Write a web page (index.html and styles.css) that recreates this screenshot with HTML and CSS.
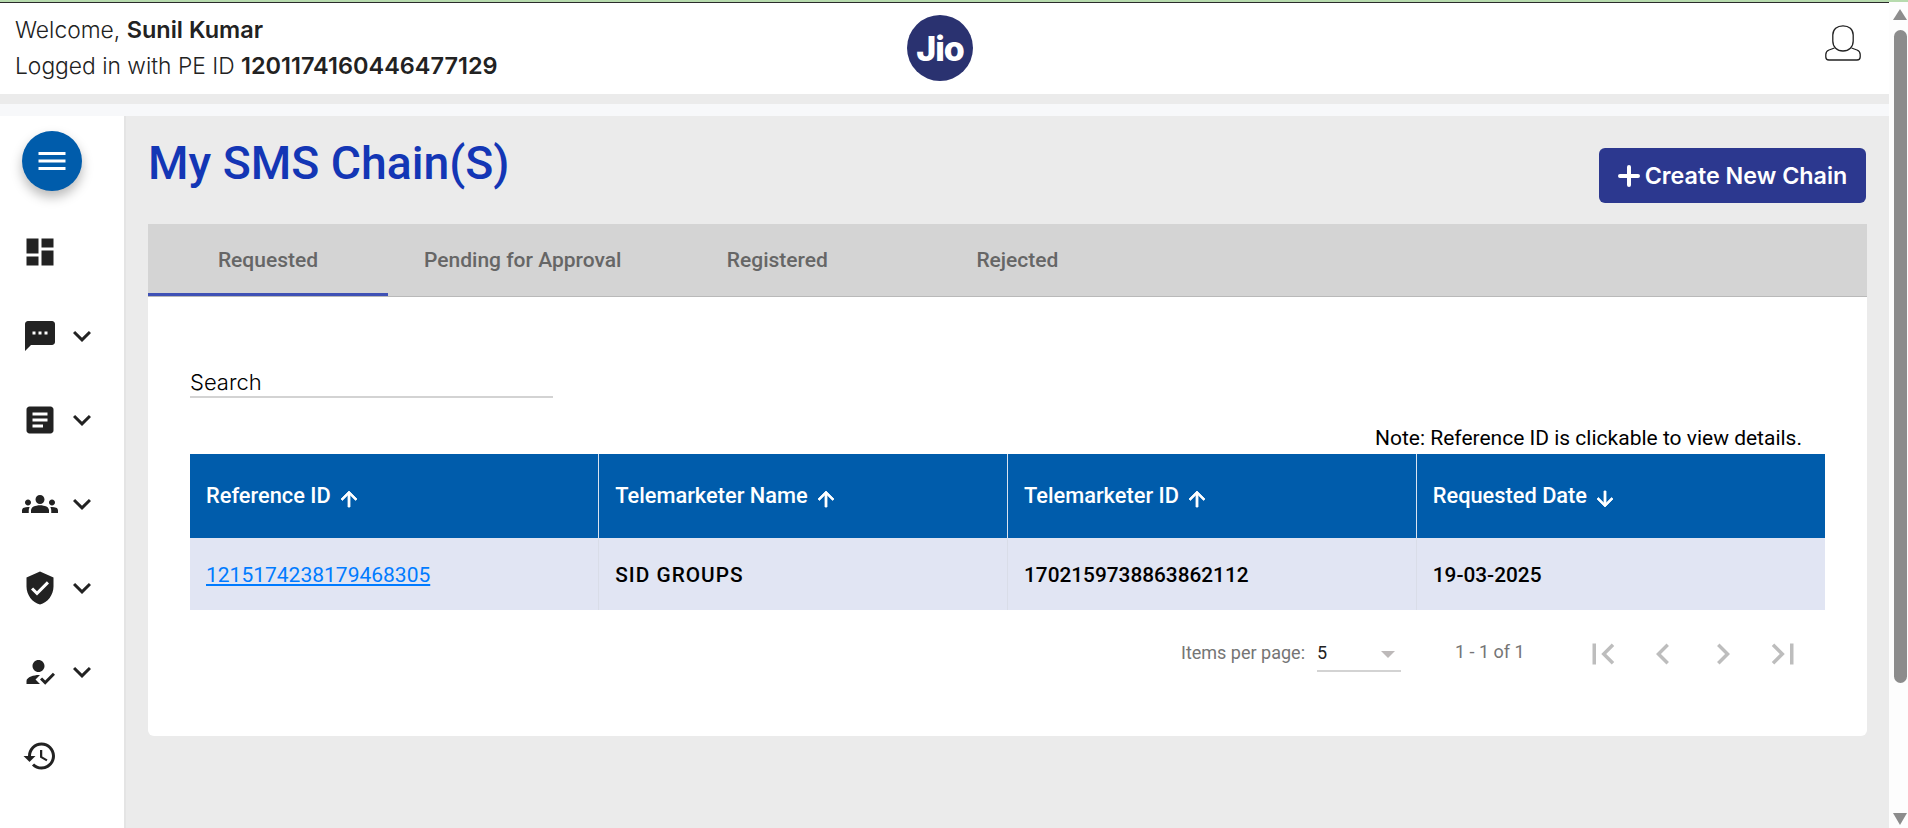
FILE: index.html
```html
<!DOCTYPE html>
<html lang="en">
<head>
<meta charset="utf-8">
<title>My SMS Chain(S)</title>
<link rel="stylesheet" href="styles.css">
</head>
<body>
<div class="app">
  <div class="page">
    <header class="header">
      <div class="welcome">
        <div class="welcome-line">Welcome, <b>Sunil Kumar</b></div>
        <div class="welcome-line">Logged in with PE ID <b>1201174160446477129</b></div>
      </div>
      <div class="logo"><span>Jio</span></div>
      <div class="user">
        <svg class="user-icon" viewBox="0 0 36 36" fill="none" stroke="#222" stroke-width="1.3">
          <path d="M18 .8C12 .8 7.800 4.500 7.800 10v6c0 6 4.200 10 10.200 10s10.200-4 10.200-10v-6C28.200 4.500 24 .8 18 .8z"/>
          <path d="M9.500 23L4 25C1.500 26 .8 27.500.8 29.500V32c0 2 1.200 3 3.200 3h28c2 0 3.200-1 3.200-3v-2.500c0-2-.7-3.500-3.200-4.500l-5.500-2"/>
        </svg>
      </div>
    </header>
    <div class="band-grey"></div>
    <div class="band-light"></div>
    <div class="body-row">
      <nav class="sidebar">
        <button class="fab" aria-label="Menu">
          <svg viewBox="0 0 24 24" class="fab-icon"><path d="M3 18h18v-2H3v2zm0-5h18v-2H3v2zm0-7v2h18V6H3z"/></svg>
        </button>
        <div class="nav-row"><svg class="nav-icon" viewBox="0 0 24 24"><path d="M3 13h8V3H3v10zm0 8h8v-6H3v6zm10 0h8V11h-8v10zm0-18v6h8V3h-8z"/></svg></div>
        <div class="nav-row"><svg class="nav-icon" viewBox="0 0 24 24"><path d="M20 2H4c-1.100 0-1.990.9-1.990 2L2 22l4-4h14c1.100 0 2-.9 2-2V4c0-1.100-.9-2-2-2zM9 11H7V9h2v2zm4 0h-2V9h2v2zm4 0h-2V9h2v2z"/></svg><svg class="nav-icon" viewBox="0 0 24 24"><path d="M16.590 8.590L12 13.170 7.410 8.590 6 10l6 6 6-6z"/></svg></div>
        <div class="nav-row"><svg class="nav-icon" viewBox="0 0 24 24"><path d="M19 3H5c-1.100 0-2 .9-2 2v14c0 1.100.9 2 2 2h14c1.100 0 2-.9 2-2V5c0-1.100-.9-2-2-2zm-5 14H7v-2h7v2zm3-4H7v-2h10v2zm0-4H7V7h10v2z"/></svg><svg class="nav-icon" viewBox="0 0 24 24"><path d="M16.590 8.590L12 13.170 7.410 8.590 6 10l6 6 6-6z"/></svg></div>
        <div class="nav-row"><svg class="nav-icon" viewBox="0 0 24 24"><path d="M12 12.750c1.630 0 3.070.39 4.240.9 1.080.48 1.760 1.560 1.760 2.730V18H6v-1.610c0-1.180.68-2.260 1.760-2.730 1.170-.52 2.610-.91 4.240-.91zM4 13c1.100 0 2-.9 2-2s-.9-2-2-2-2 .9-2 2 .9 2 2 2zm1.130 1.100c-.37-.06-.74-.1-1.130-.1-.99 0-1.930.21-2.780.58C.48 14.900 0 15.620 0 16.430V18h4.500v-1.610c0-.83.23-1.610.63-2.290zM20 13c1.100 0 2-.9 2-2s-.9-2-2-2-2 .9-2 2 .9 2 2 2zm4 3.430c0-.81-.48-1.530-1.220-1.850-.85-.37-1.790-.58-2.780-.58-.39 0-.76.04-1.130.1.4.68.63 1.460.63 2.290V18H24v-1.570zM12 6c1.660 0 3 1.340 3 3s-1.340 3-3 3-3-1.340-3-3 1.340-3 3-3z"/></svg><svg class="nav-icon" viewBox="0 0 24 24"><path d="M16.590 8.590L12 13.170 7.410 8.590 6 10l6 6 6-6z"/></svg></div>
        <div class="nav-row"><svg class="nav-icon" viewBox="0 0 24 24"><path d="M12 1L3 5v6c0 5.550 3.840 10.740 9 12 5.160-1.260 9-6.450 9-12V5l-9-4zm-2 16l-4-4 1.410-1.410L10 14.170l6.590-6.590L18 9l-8 8z"/></svg><svg class="nav-icon" viewBox="0 0 24 24"><path d="M16.590 8.590L12 13.170 7.410 8.590 6 10l6 6 6-6z"/></svg></div>
        <div class="nav-row"><svg class="nav-icon" viewBox="0 0 24 24"><path d="M9 17l3-2.940c-.39-.04-.68-.06-1-.06-2.670 0-8 1.340-8 4v2h9l-3-3zm2-5c2.210 0 4-1.790 4-4s-1.790-4-4-4-4 1.790-4 4 1.790 4 4 4m4.470 8.500L12 17l1.400-1.410 2.070 2.080 5.130-5.170 1.400 1.410z"/></svg><svg class="nav-icon" viewBox="0 0 24 24"><path d="M16.590 8.590L12 13.170 7.410 8.590 6 10l6 6 6-6z"/></svg></div>
        <div class="nav-row"><svg class="nav-icon" viewBox="0 0 24 24"><path d="M13 3c-4.970 0-9 4.030-9 9H1l3.890 3.890.07.14L9 12H6c0-3.870 3.130-7 7-7s7 3.130 7 7-3.130 7-7 7c-1.930 0-3.680-.79-4.940-2.060l-1.420 1.420C8.270 19.990 10.510 21 13 21c4.970 0 9-4.030 9-9s-4.030-9-9-9zm-1 5v5l4.280 2.540.72-1.210-3.500-2.080V8H12z"/></svg></div>
      </nav>
      <main class="content">
        <div class="title-row">
          <h1 class="title">My SMS Chain(S)</h1>
          <button class="create-btn"><svg class="plus" viewBox="0 0 22 22"><path d="M11 2v18M2 11h18"/></svg>Create New Chain</button>
        </div>
        <section class="card">
          <div class="tabs">
            <div class="tab active">Requested</div>
            <div class="tab">Pending for Approval</div>
            <div class="tab">Registered</div>
            <div class="tab">Rejected</div>
          </div>
          <div class="card-body">
            <div class="search">Search</div>
            <div class="note">Note: Reference ID is clickable to view details.</div>
            <table class="grid">
              <thead>
                <tr>
                  <th>Reference ID<svg class="sort" viewBox="0 0 24 24"><path d="M4 12l1.410 1.410L11 7.830V20h2V7.830l5.580 5.590L20 12l-8-8-8 8z"/></svg></th>
                  <th>Telemarketer Name<svg class="sort" viewBox="0 0 24 24"><path d="M4 12l1.410 1.410L11 7.830V20h2V7.830l5.580 5.590L20 12l-8-8-8 8z"/></svg></th>
                  <th>Telemarketer ID<svg class="sort" viewBox="0 0 24 24"><path d="M4 12l1.410 1.410L11 7.830V20h2V7.830l5.580 5.590L20 12l-8-8-8 8z"/></svg></th>
                  <th>Requested Date<svg class="sort" viewBox="0 0 24 24"><path d="M20 12l-1.410-1.410L13 16.170V4h-2v12.170l-5.580-5.590L4 12l8 8 8-8z"/></svg></th>
                </tr>
              </thead>
              <tbody>
                <tr>
                  <td><a class="ref-link" href="#">1215174238179468305</a></td>
                  <td class="name-cell">SID GROUPS</td>
                  <td>1702159738863862112</td>
                  <td>19-03-2025</td>
                </tr>
              </tbody>
            </table>
            <div class="paginator">
              <span class="items-label">Items per page:</span>
              <div class="page-select"><span>5</span><i class="caret"></i></div>
              <span class="range">1 - 1 of 1</span>
              <div class="pager">
                <svg class="pager-icon" viewBox="0 0 24 24"><path d="M18.410 16.590L13.820 12l4.590-4.590L17 6l-6 6 6 6zM6 6h2v12H6z"/></svg>
                <svg class="pager-icon" viewBox="0 0 24 24"><path d="M15.410 7.410L14 6l-6 6 6 6 1.410-1.410L10.830 12z"/></svg>
                <svg class="pager-icon" viewBox="0 0 24 24"><path d="M10 6L8.590 7.410 13.170 12l-4.580 4.590L10 18l6-6z"/></svg>
                <svg class="pager-icon" viewBox="0 0 24 24"><path d="M5.590 7.410L10.180 12l-4.590 4.590L7 18l6-6-6-6zM16 6h2v12h-2z"/></svg>
              </div>
            </div>
          </div>
        </section>
      </main>
    </div>
  </div>
  <aside class="scrollbar">
    <i class="sb-up"></i>
    <div class="sb-thumb"></div>
    <i class="sb-down"></i>
  </aside>
</div>
</body>
</html>
```
FILE: styles.css
```css
* { box-sizing: border-box; }
html, body { margin: 0; height: 828px; overflow: hidden; }
body { font-family: Roboto, "Liberation Sans", sans-serif; background: #fff; color: #000; }
.app { display: flex; height: 828px; border-top: 2px solid #b7dbae; }
.page { flex: 1; min-width: 0; display: flex; flex-direction: column; border-top: 1px solid #2b2b2b; }
.header { height: 91px; flex: none; display: flex; background: #fff; }
.welcome { width: 907px; padding: 9px 0 0 15px; font-family: Inter, sans-serif; font-weight: 300; font-size: 22.8px; color: #222; }
.welcome-line { line-height: 36px; }
.welcome b { font-weight: 600; font-size: 23.5px; }
.logo { width: 66px; height: 66px; margin-top: 12px; border-radius: 50%; background: #2a3270; color: #fff; display: flex; align-items: center; justify-content: center; font-family: Inter, sans-serif; font-weight: 800; font-size: 34px; letter-spacing: -1px; }
.user { flex: 1; display: flex; justify-content: flex-end; padding: 22px 28px 0 0; }
.user-icon { width: 36px; height: 36px; }
.band-grey { height: 10px; flex: none; background: #ebebeb; }
.band-light { height: 12px; flex: none; background: #f7f8fa; }
.body-row { flex: 1; display: flex; min-height: 0; }
.sidebar { width: 126px; flex: none; background: #fff; border-right: 2px solid #e4e4e4; padding: 15px 0 0 22px; }
.fab { display: block; width: 60px; height: 60px; margin: 0 0 19px 0; padding: 0; border: 0; border-radius: 50%; background: #005cab; box-shadow: 0 6px 12px rgba(0,0,0,.28); }
.fab-icon { display: block; width: 36px; height: 36px; margin: auto; fill: #fff; }
.nav-row { height: 84px; display: flex; align-items: center; gap: 6px; }
.nav-icon { width: 36px; height: 36px; fill: #222; flex: none; }
.content { flex: 1; min-width: 0; background: #ebebeb; padding: 0 22px; }
.title-row { height: 108px; display: flex; justify-content: space-between; align-items: flex-start; }
.title { margin: 20px 0 0; font-weight: 500; font-size: 46.3px; line-height: 54px; color: #1336b5; }
.create-btn { width: 267px; height: 55px; margin: 32px 1px 0 0; border: 0; border-radius: 6px; background: #2c388f; color: #fff; font-family: Inter, sans-serif; font-weight: 600; font-size: 23.3px; display: flex; align-items: center; justify-content: center; gap: 5px; padding: 0; }
.plus { width: 22px; height: 22px; fill: none; stroke: #fff; stroke-width: 4; stroke-linecap: round; }
.card { background: #fff; border-radius: 0 0 6px 6px; height: 512px; }
.tabs { height: 73px; display: flex; background: #d4d4d4; border-bottom: 1px solid #b9b9b9; }
.tab { min-width: 240px; padding: 0 36px; display: flex; align-items: center; justify-content: center; font-size: 21px; font-weight: 500; color: #666; }
.tab.active { box-shadow: inset 0 -3px 0 #3f51b5; }
.card-body { padding: 0 42px; }
.search { margin-top: 72px; width: 363px; height: 29px; border-bottom: 2px solid #d3d3d3; font-family: Inter, sans-serif; font-weight: 300; font-size: 22px; line-height: 26px; }
.note { margin-top: 27px; height: 29px; padding-right: 23px; text-align: right; font-size: 21px; line-height: 26px; }
.grid { width: 100%; border-collapse: collapse; table-layout: fixed; }
.grid th { height: 84px; background: #005cab; color: #fff; font-weight: 500; font-size: 21.8px; text-align: left; padding: 2px 16px 0; border-left: 1px solid #d9e3f0; }
.grid th:first-child { border-left: 0; }
.grid td { height: 72px; background: #e1e5f3; font-weight: 500; font-size: 20.8px; padding: 1px 16px 0; border-left: 1px solid #d9dde8; }
.grid td:first-child { border-left: 0; }
.grid .name-cell { letter-spacing: 1px; }
.ref-link { color: #007bff; font-weight: 400; font-size: 21px; }
.sort { width: 24px; height: 24px; fill: #fff; stroke: #fff; stroke-width: .8; margin-left: 6px; vertical-align: -8px; }
.paginator { margin-top: 30px; display: flex; align-items: flex-start; font-size: 18px; color: #757575; padding-left: 991px; }
.items-label { line-height: 26px; width: 136px; }
.page-select { width: 84px; height: 32px; border-bottom: 2px solid #d3d3d3; display: flex; justify-content: space-between; padding: 0 6px 0 0; color: #222; line-height: 26px; }
.caret { width: 0; height: 0; margin-top: 11px; border: 7px solid transparent; border-top: 7px solid #bdb9b9; border-bottom: 0; }
.range { margin-left: 54px; width: 70px; line-height: 24px; }
.pager { margin-left: 57px; display: flex; gap: 18px; margin-top: -7px; }
.pager-icon { width: 42px; height: 42px; fill: #bdbdbd; flex: none; }
.scrollbar { width: 19px; flex: none; background: #fdfdfd; position: relative; }
.sb-up, .sb-down { position: absolute; left: 4px; width: 0; height: 0; border-left: 7px solid transparent; border-right: 7px solid transparent; }
.sb-up { top: 7px; border-bottom: 11px solid #8c8c8c; }
.sb-down { bottom: 3px; border-top: 12px solid #8c8c8c; }
.sb-thumb { position: absolute; top: 28px; left: 5px; width: 13px; height: 653px; border-radius: 7px; background: #8c8c8c; }
```
